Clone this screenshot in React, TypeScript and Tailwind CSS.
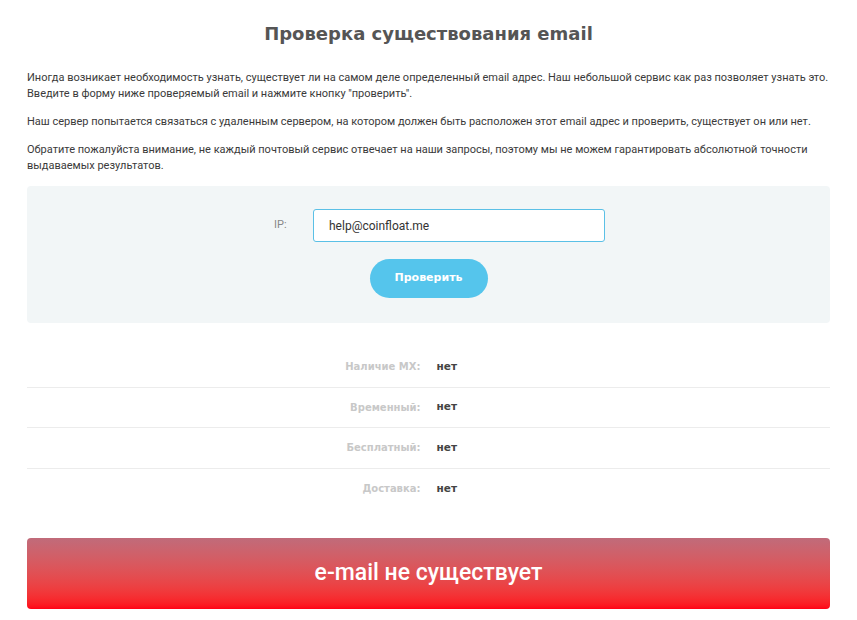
const rows = [
  { label: 'Наличие MX:', value: 'нет' },
  { label: 'Временный:', value: 'нет' },
  { label: 'Бесплатный:', value: 'нет' },
  { label: 'Доставка:', value: 'нет' },
];

export default function App() {
  return (
    <div className="min-h-[620px] bg-white px-[27px] pb-[10px] pt-[20px] font-['Roboto',sans-serif] text-[#3a3a3a]">
      <h1 className="text-center font-['DejaVu_Sans',sans-serif] text-[18px] font-bold leading-[28px] text-[#555]">
        Проверка существования email
      </h1>

      <div className="mt-[22px] text-[11px] leading-[16px]">
        <p>
          Иногда возникает необходимость узнать, существует ли на самом деле определенный email адрес. Наш небольшой сервис как раз позволяет узнать это.
          <br />
          Введите в форму ниже проверяемый email и нажмите кнопку "проверить".
        </p>
        <p className="mt-[12px]">
          Наш сервер попытается связаться с удаленным сервером, на котором должен быть расположен этот email адрес и проверить, существует он или нет.
        </p>
        <p className="mt-[12px]">
          Обратите пожалуйста внимание, не каждый почтовый сервис отвечает на наши запросы, поэтому мы не можем гарантировать абсолютной точности выдаваемых результатов.
        </p>
      </div>

      <div className="mt-[12px] flex h-[137px] flex-col items-center rounded-[4px] bg-[#f2f6f7] pt-[23px]">
        <div className="flex items-center pl-[22px]">
          <label className="w-[39px] text-[11px] text-[#888]">IP:</label>
          <input
            defaultValue="help@coinfloat.me"
            className="h-[33px] w-[292px] rounded-[3px] border border-[#5bc0e6] bg-white px-[15px] text-[12px] text-[#333] outline-none"
          />
        </div>
        <button className="mt-[17px] h-[39px] w-[118px] rounded-full bg-[#55c5ec] font-['DejaVu_Sans',sans-serif] text-[11px] font-bold text-white">
          Проверить
        </button>
      </div>

      <div className="mt-[24px]">
        {rows.map((row, i) => (
          <div
            key={row.label}
            className={`grid h-[40.5px] grid-cols-2 items-center gap-[16px] ${i < rows.length - 1 ? 'border-b border-[#ececec]' : ''}`}
          >
            <span className="text-right font-['DejaVu_Sans',sans-serif] text-[10px] font-bold text-[#c8c8c8]">{row.label}</span>
            <span className="font-['DejaVu_Sans',sans-serif] text-[10.5px] font-bold text-[#444]">{row.value}</span>
          </div>
        ))}
      </div>

      <div className="mt-[29px] flex h-[71px] items-center justify-center rounded-[4px] bg-gradient-to-b from-[#c06b7a] to-[#ff0015]">
        <span className="text-[23px] font-medium text-white">e-mail не существует</span>
      </div>
    </div>
  );
}
